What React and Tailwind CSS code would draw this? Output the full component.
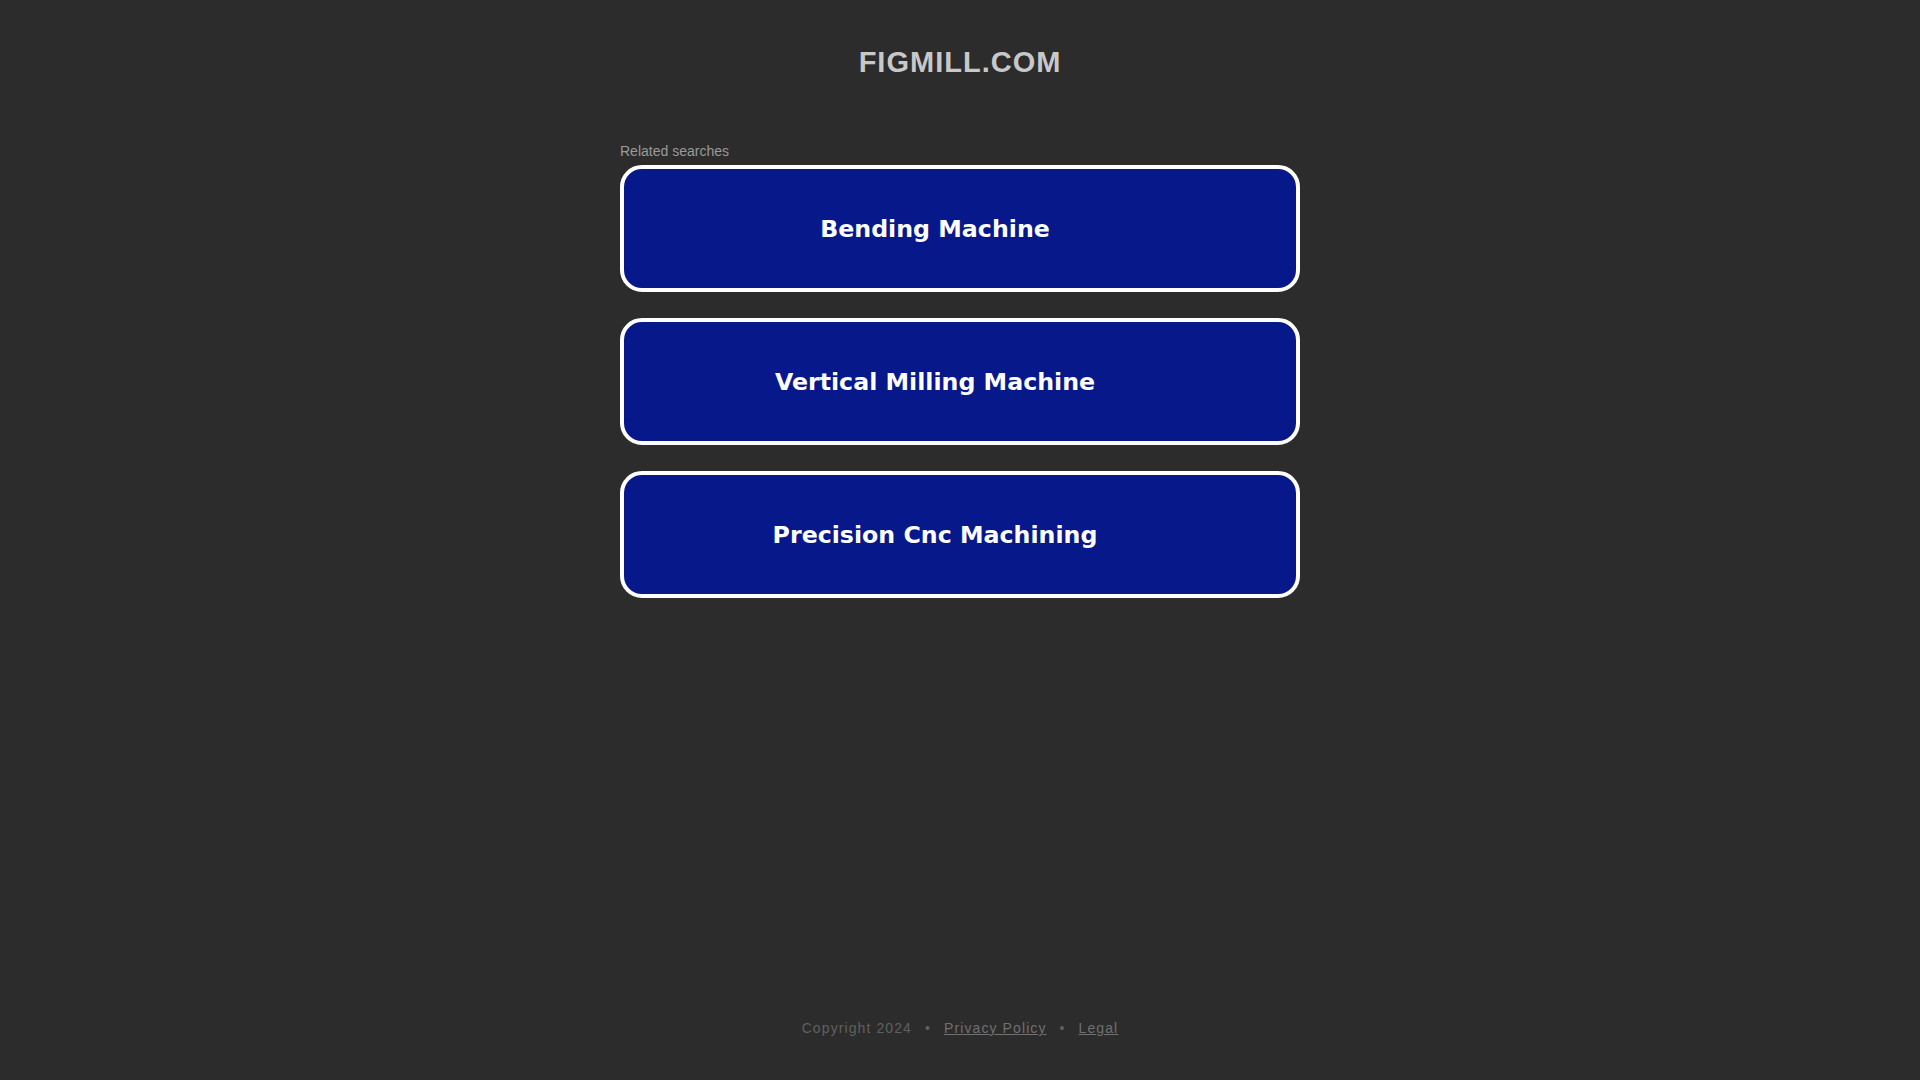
export default function App() {
  const items = ["Bending Machine", "Vertical Milling Machine", "Precision Cnc Machining"];
  return (
    <div className="min-h-screen w-full bg-[#2c2c2c] flex flex-col items-center" style={{ height: 1080 }}>
      <h1 className="pt-[44px] text-[29px] leading-[36px] font-bold tracking-[1px] text-[#c8c8c8] [font-family:'Liberation_Sans',Arial,sans-serif]">
        FIGMILL.COM
      </h1>
      <div className="w-[680px] mt-[63px]">
        <div className="text-[14px] leading-[16px] text-[#9a9a9a] [font-family:'Liberation_Sans',Arial,sans-serif] mb-[6px]">
          Related searches
        </div>
        <div className="flex flex-col gap-[26px]">
          {items.map((t) => (
            <a
              key={t}
              href="#"
              className="flex items-center justify-center h-[127px] rounded-[22px] border-[4px] border-white bg-[#07188a] pr-[50px] pt-[2px] text-white font-bold text-[23.7px] [font-family:'DejaVu_Sans',Verdana,sans-serif]"
            >
              {t}
            </a>
          ))}
        </div>
      </div>
      <div className="mt-auto mb-[43px] text-[14px] leading-[18px] tracking-[1.1px] text-[#606060] [font-family:'Liberation_Sans',Arial,sans-serif] flex items-center gap-[13px]">
        <span>Copyright 2024</span>
        <span>•</span>
        <a href="#" className="underline text-[#707070]">Privacy Policy</a>
        <span>•</span>
        <a href="#" className="underline text-[#707070]">Legal</a>
      </div>
    </div>
  );
}
